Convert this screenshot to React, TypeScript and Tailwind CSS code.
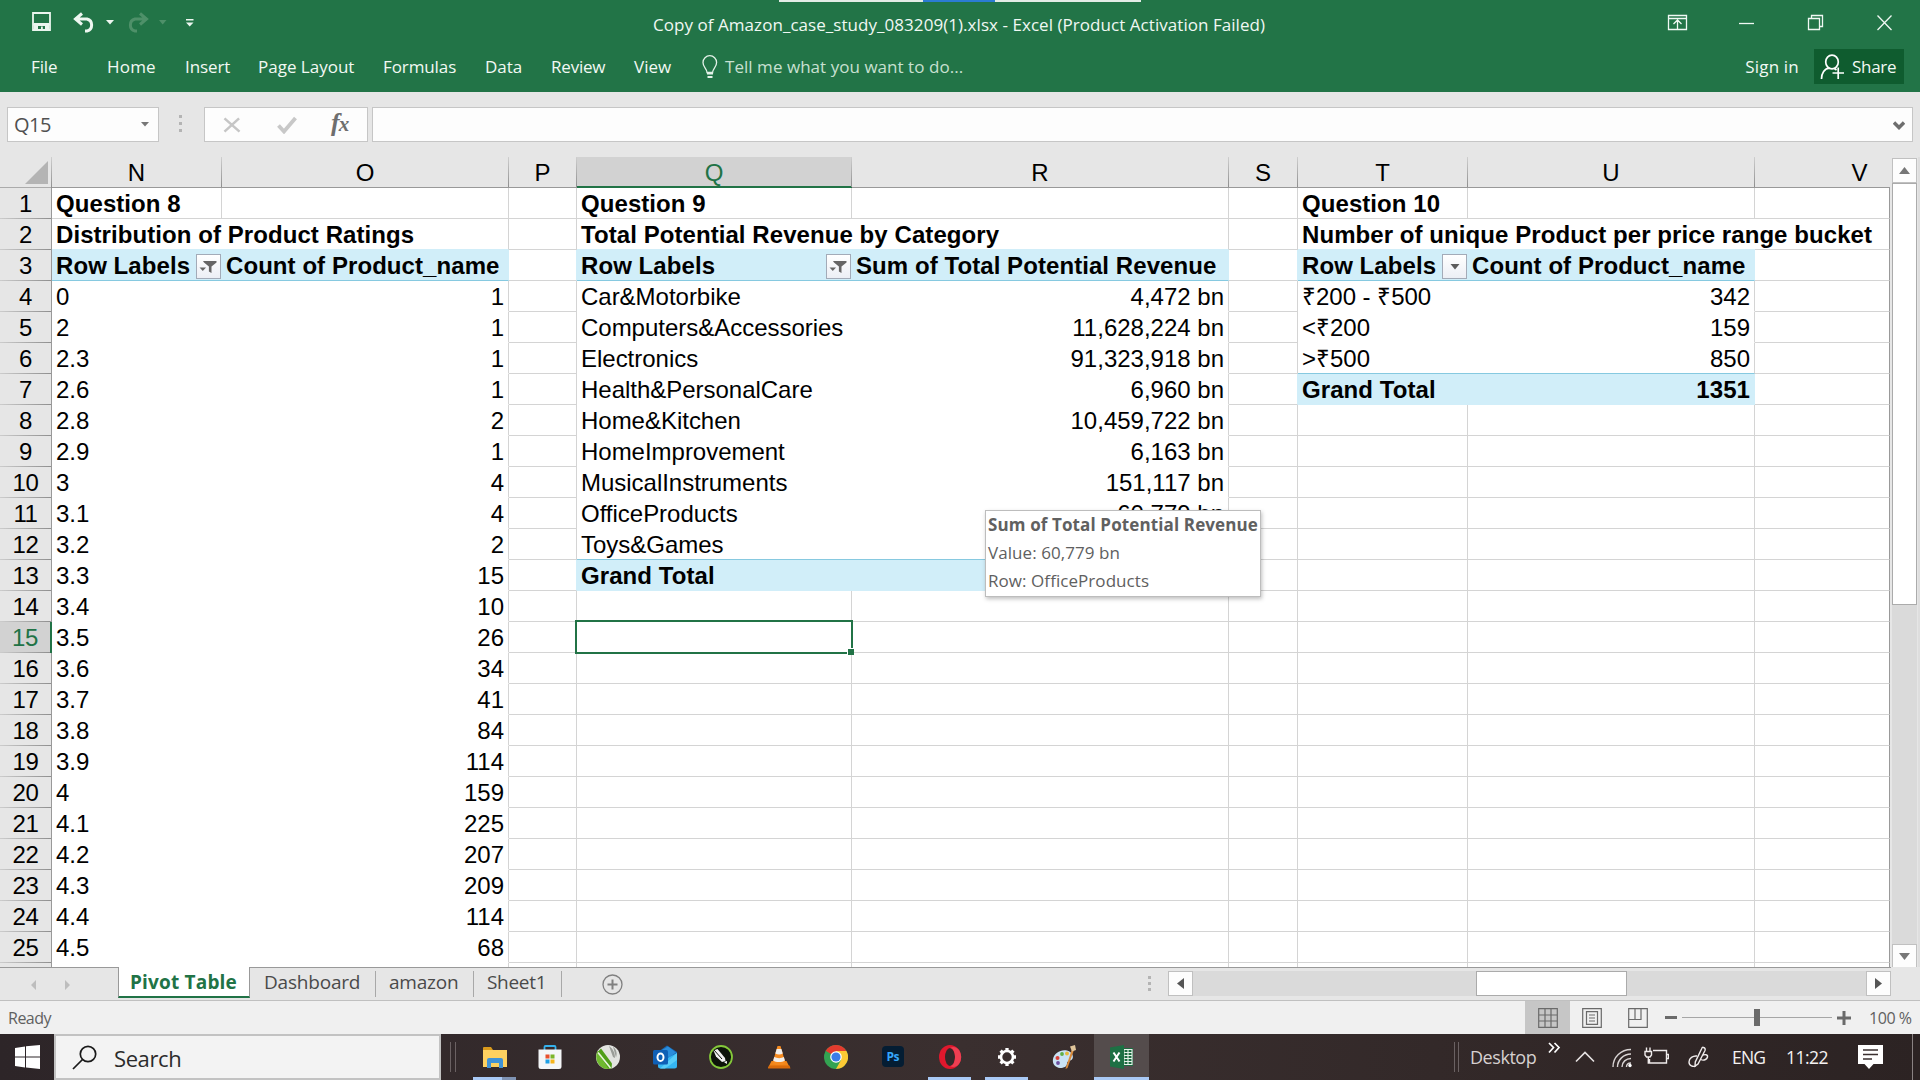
import React from "react";

type Col = { id: string; w: string };

const COLS: Col[] = [
  { id: "N", w: "w-[170px]" },
  { id: "O", w: "w-[287px]" },
  { id: "P", w: "w-[68px]" },
  { id: "Q", w: "w-[275px]" },
  { id: "R", w: "w-[377px]" },
  { id: "S", w: "w-[69px]" },
  { id: "T", w: "w-[170px]" },
  { id: "U", w: "w-[287px]" },
  { id: "V", w: "w-[135px]" },
];

const RATINGS: [string, string][] = [
  ["0", "1"], ["2", "1"], ["2.3", "1"], ["2.6", "1"], ["2.8", "2"], ["2.9", "1"],
  ["3", "4"], ["3.1", "4"], ["3.2", "2"], ["3.3", "15"], ["3.4", "10"], ["3.5", "26"],
  ["3.6", "34"], ["3.7", "41"], ["3.8", "84"], ["3.9", "114"], ["4", "159"], ["4.1", "225"],
  ["4.2", "207"], ["4.3", "209"], ["4.4", "114"], ["4.5", "68"],
];

const REVENUE: [string, string][] = [
  ["Car&Motorbike", "4,472 bn"],
  ["Computers&Accessories", "11,628,224 bn"],
  ["Electronics", "91,323,918 bn"],
  ["Health&PersonalCare", "6,960 bn"],
  ["Home&Kitchen", "10,459,722 bn"],
  ["HomeImprovement", "6,163 bn"],
  ["MusicalInstruments", "151,117 bn"],
  ["OfficeProducts", "60,779 bn"],
  ["Toys&Games", ""],
  ["Grand Total", ""],
];

const PRICES: [string, string][] = [
  ["₹200 - ₹500", "342"],
  ["<₹200", "159"],
  [">₹500", "850"],
  ["Grand Total", "1351"],
];

const DATA: Record<string, string> = {
  N1: "Question 8",
  N2: "Distribution of Product Ratings",
  N3: "Row Labels",
  O3: "Count of Product_name",
  Q1: "Question 9",
  Q2: "Total Potential Revenue by Category",
  Q3: "Row Labels",
  R3: "Sum of Total Potential Revenue",
  T1: "Question 10",
  T2: "Number of unique Product per price range bucket",
  T3: "Row Labels",
  U3: "Count of Product_name",
};
RATINGS.forEach(([a, b], i) => { DATA["N" + (i + 4)] = a; DATA["O" + (i + 4)] = b; });
REVENUE.forEach(([a, b], i) => { DATA["Q" + (i + 4)] = a; DATA["R" + (i + 4)] = b; });
PRICES.forEach(([a, b], i) => { DATA["T" + (i + 4)] = a; DATA["U" + (i + 4)] = b; });

// Last row of the pivot table that a column belongs to, and its total row.
const PIVOT_END: Record<string, number> = { N: 99, O: 99, Q: 13, R: 13, T: 7, U: 7 };
const NEXT: Record<string, string> = { O: "P", P: "Q", R: "S", S: "T", U: "V" };

function isBlue(col: string, row: number) {
  const end = PIVOT_END[col];
  return end !== undefined && (row === 3 || row === end);
}

function FilterButton({ filtered }: { filtered: boolean }) {
  return (
    <span className="mt-1 mr-px ml-auto flex h-[25px] w-[25px] shrink-0 items-center justify-center border border-[#a3abb8] bg-linear-to-b from-white to-[#eceff5]">
      {filtered ? (
        <svg width="19" height="15" viewBox="0 0 19 15" fill="#666666">
          <path d="M4 2h13.500v1.500l-5 4v6.500l-2.600-1.500v-5l-4.900-4z" />
          <path d="M.5 8.500h6.500l-3.200 3.500z" />
        </svg>
      ) : (
        <svg width="10" height="6" viewBox="0 0 10 6" fill="#5c5c5c"><path d="M.5 0h9l-4.500 5.500z" /></svg>
      )}
    </span>
  );
}

function Cell({ col, w, row }: { col: string; w: string; row: number }) {
  const end = PIVOT_END[col];
  const inPivot = end !== undefined && row >= 3 && row <= end;
  const blue = isBlue(col, row);
  const first = col === "N" || col === "Q" || col === "T";
  const text = DATA[col + row];
  const bold = row <= 3 || blue;
  const right = !first && row > 3;

  let br = "border-r border-r-[#d4d4d4]";
  if (first && inPivot) br = "";
  else if (col === "V") br = "border-r border-r-[#999999]";
  else if (blue || (NEXT[col] && isBlue(NEXT[col], row))) br = "border-r border-r-[#d1eef9]";
  else if (row === 2 && (first || col === "U")) br = "";

  let bb = "border-b-[#d4d4d4]";
  if (end !== undefined) {
    if (row === 2 || row === end) bb = "border-b-[#d1eef9]";
    else if (row === 3 || row === end - 1) bb = "border-b-[#86c9e0]";
    else if (inPivot) bb = "border-b-transparent";
  }

  return (
    <div className={`relative flex h-[31px] shrink-0 border-b pl-1 ${w} ${br} ${bb} ${blue ? "bg-[#d1eef9]" : ""} ${right ? "justify-end pr-1" : ""}`}>
      {text && (
        <span className={`leading-[31px] whitespace-nowrap text-black ${bold ? "font-bold tracking-[0.07px]" : right ? "" : "tracking-[-0.02px]"}`}>{text}</span>
      )}
      {row === 3 && first && <FilterButton filtered={col !== "T"} />}
      {col === "Q" && row === 15 && (
        <div className="absolute -top-[2px] -right-[2px] -bottom-[2px] -left-[2px] z-10 border-2 border-[#217346]">
          <div className="absolute -right-[3px] -bottom-[3px] h-[7px] w-[7px] border-t border-l border-white bg-[#217346]" />
        </div>
      )}
      {col === "R" && row === 11 && (
        <div className="absolute top-[12px] left-[133px] z-20 flex h-[87px] w-[276px] flex-col border border-[#bdbdbd] bg-white pl-[2px] font-['Open_Sans',sans-serif] text-[17px] whitespace-nowrap text-[#606060] shadow-[1px_2px_4px_rgba(0,0,0,0.25)]">
          <span className="h-7 leading-7 font-bold tracking-[0.12px]">Sum of Total Potential Revenue</span>
          <span className="h-7 leading-7 tracking-[0.06px]">Value: 60,779 bn</span>
          <span className="h-7 leading-7 tracking-[0.06px]">Row: OfficeProducts</span>
        </div>
      )}
    </div>
  );
}

function TitleBar() {
  return (
    <div className="relative flex h-[46px] items-center text-white">
      <div className="absolute top-0 left-[779px] flex h-[2px] w-[362px] bg-[#e3ece6]">
        <div className="ml-[144px] h-full w-[72px] bg-[#2b7cd3]" />
      </div>
      <svg className="ml-8" width="170" height="24" viewBox="32 11 170 24" fill="none">
        <path d="M33 13h17v17h-17zM33 24.500h17" stroke="#eaf5ee" strokeWidth="1.800" />
        <path d="M34 23h15v7h-4v-4h-7v4h-4z" fill="#eaf5ee" />
        <path d="M41 26.500h1.800v4h-1.800z" fill="#eaf5ee" />
        <path d="M82 13.500l-6.500 5.500 6.500 5.500M76 19h11a6.200 6.200 0 0 1 0 12h-2" stroke="#eef7f1" strokeWidth="3" />
        <path d="M106 20h8l-4 4.500z" fill="#eef7f1" />
        <path d="M140 13.500l6.500 5.500-6.500 5.500M146 19h-11a6.200 6.200 0 0 0 0 12h2" stroke="#4e9069" strokeWidth="3" />
        <path d="M159 20h7.500l-3.800 4.500z" fill="#4e9069" />
        <path d="M186 19h7.500v1.500h-7.500zM186 22.500h7.500l-3.800 4z" fill="#eef7f1" />
      </svg>
      <div className="ml-[451px] pt-[3px] text-[17px] leading-6 tracking-[0.05px] whitespace-nowrap text-[#f0f8f3]">
        Copy of Amazon_case_study_083209(1).xlsx - Excel (Product Activation Failed)
      </div>
      <svg className="ml-auto mr-[27px]" width="226" height="18" viewBox="1667 14 226 18" fill="none" stroke="#f0f8f3" strokeWidth="1.300">
        <path d="M1668.500 15.500h18v14h-18zM1668.500 18.500h18M1677.500 29v-9M1673.500 24l4-4 4 4" />
        <path d="M1739 23.500h15" />
        <path d="M1808.500 18.500h11v11h-11zM1811.500 18v-2.500h11v11h-3" />
        <path d="M1877.500 15.500l14 14.500M1891.500 15.500l-14 14.500" />
      </svg>
    </div>
  );
}

function Menu() {
  return (
    <div className="flex h-[46px] text-[17px] leading-[42px] whitespace-nowrap text-[#f2f9f4]">
      <span className="ml-[31px] w-[76px] tracking-[-0.1px]">File</span>
      <span className="w-[78px] tracking-[0.2px]">Home</span>
      <span className="w-[73px] tracking-[-0.1px]">Insert</span>
      <span className="w-[125px]">Page Layout</span>
      <span className="w-[102px] tracking-[-0.1px]">Formulas</span>
      <span className="w-[66px]">Data</span>
      <span className="w-[83px] tracking-[-0.2px]">Review</span>
      <span className="w-[68px]">View</span>
      <svg className="mt-[9px]" width="16" height="24" viewBox="0 0 16 24" fill="none" stroke="#e4f2e9" strokeWidth="1.300">
        <path d="M5 17.500c0-4-4-5-4-10a6.800 6.800 0 0 1 13.600 0c0 5-4 6-4 10z" />
        <path d="M5 18.500h6M5.500 22h5" strokeWidth="2" />
      </svg>
      <span className="ml-[7px] tracking-[0.04px] text-[#c8e0d1]">Tell me what you want to do...</span>
      <span className="ml-auto mr-[15px] tracking-[0.2px]">Sign in</span>
      <div className="mr-4 mt-[3px] flex h-[35px] w-[90px] items-center bg-[#0f5c2f]">
        <svg className="ml-[6px]" width="25" height="26" viewBox="0 0 25 26" fill="none" stroke="white" strokeWidth="1.700">
          <ellipse cx="12" cy="8" rx="6.300" ry="6.800" />
          <path d="M1.500 25c0-6 3-10.500 8-10.800M14.500 14.500l2 1.500M12.500 19h11.500M18.200 13.500v11.500" />
        </svg>
        <span className="ml-[7px] leading-[34px] tracking-[-0.3px]">Share</span>
      </div>
    </div>
  );
}

function FormulaBar() {
  return (
    <div className="flex h-[65px] items-start bg-[#e6e6e6] pt-[15px]">
      <div className="ml-[7px] flex h-[35px] w-[152px] items-center justify-between border border-[#c6c6c6] bg-[#fdfdfd] pr-[9px] pl-[6px] text-[20px] text-[#505050]">
        <span className="tracking-[-0.5px]">Q15</span>
        <svg width="8" height="5" viewBox="0 0 8 5"><path d="M0 0h8l-4 4.500z" fill="#777" /></svg>
      </div>
      <div className="ml-5 mt-2 flex flex-col gap-1">
        <span className="h-[3px] w-[3px] bg-[#b4b4b4]" />
        <span className="h-[3px] w-[3px] bg-[#b4b4b4]" />
        <span className="h-[3px] w-[3px] bg-[#b4b4b4]" />
      </div>
      <div className="ml-[22px] flex h-[35px] w-[164px] items-center border border-[#c6c6c6] bg-[#fdfdfd]">
        <svg className="ml-[18px]" width="18" height="16" viewBox="0 0 19 17" fill="none" stroke="#c6c6c6" strokeWidth="2.700"><path d="M1.500 1.500l16 14M17 1.500l-15.500 14" /></svg>
        <svg className="ml-9" width="20" height="18" viewBox="0 0 20 18" fill="none" stroke="#c8c8c8" strokeWidth="3.800"><path d="M1.500 9.500l5.500 6L18.500 2" /></svg>
        <span className="ml-[34px] -mt-[3px] font-['Liberation_Serif',serif] text-[26px] leading-[30px] font-bold tracking-[-1px] text-[#6e6e6e] italic">f<span className="text-[21px]">x</span></span>
      </div>
      <div className="ml-1 flex h-[35px] w-[1541px] items-center justify-end border border-[#c6c6c6] bg-[#fdfdfd] pr-[7px]">
        <svg className="mt-[2px]" width="12" height="10" viewBox="0 0 12 10" fill="none" stroke="#6e6e6e" strokeWidth="3.400"><path d="M1 1.500l5 5 5-5" /></svg>
      </div>
    </div>
  );
}

function ColumnHeaders() {
  return (
    <div className="flex h-[31px] bg-[#e6e6e6] text-[24px] leading-[31px] text-black">
      <div className="flex w-[52px] shrink-0 items-end justify-end border-b border-b-[#ababab] pr-[4px] pb-[3px]">
        <svg width="23" height="23" viewBox="0 0 23 23"><path d="M23 0v23h-23z" fill="#b4b4b4" /></svg>
      </div>
      {COLS.map((c) => (
        <div key={c.id} className={`relative flex h-[31px] shrink-0 justify-center ${c.w} ${c.id === "Q" ? "border-b-2 border-b-[#217346] bg-[#d2d2d2] text-[#217346]" : "border-b border-b-[#999999]"} ${c.id === "V" ? "pl-[74px]" : "pr-px"}`}>
          <span>{c.id}</span>
          {c.id !== "V" && <div className="absolute top-0 right-0 h-[30px] w-px bg-linear-to-b from-[#cfcfcf] to-[#8f8f8f]" />}
          {c.id === "N" && <div className="absolute top-0 -left-px h-[31px] w-px bg-linear-to-b from-[#cfcfcf] to-[#8f8f8f]" />}
        </div>
      ))}
    </div>
  );
}

function Sheet() {
  const rows = Array.from({ length: 26 }, (_, i) => i + 1);
  return (
    <div className="flex h-[810px] bg-[#e6e6e6] font-['Liberation_Sans',Arial,sans-serif]">
      <div className="flex w-[1890px] shrink-0 flex-col overflow-hidden">
        <ColumnHeaders />
        <div className="h-[779px] overflow-hidden bg-white text-[24px]">
          {rows.map((r) => (
            <div key={r} className="flex h-[31px]">
              <div className={`flex h-[31px] w-[52px] shrink-0 flex-col ${r === 15 ? "border-r-2 border-r-[#217346] bg-[#d2d2d2] text-[#217346]" : "border-r border-r-[#999999] bg-[#e6e6e6] text-black"}`}>
                <span className="h-[30px] text-center leading-[31px] tracking-[-0.4px]">{r <= 25 ? r : ""}</span>
                <div className="h-px bg-linear-to-r from-[#cccccc] to-[#8f8f8f]" />
              </div>
              {COLS.map((c) => <Cell key={c.id} col={c.id} w={c.w} row={r} />)}
            </div>
          ))}
        </div>
      </div>
      <div className="flex w-[30px] flex-col items-center border-r-2 border-r-[#dedede] pt-[1px] pl-[1px]">
        <div className="flex h-[25px] w-[25px] items-center justify-center border border-[#c0c0c0] bg-[#fdfdfd]">
          <svg width="11" height="7" viewBox="0 0 11 7"><path d="M5.500 0l5.500 7h-11z" fill="#777" /></svg>
        </div>
        <div className="h-[422px] w-[25px] border border-[#ababab] bg-white" />
        <div className="w-[25px] grow bg-[#dadada]" />
        <div className="mb-[-2px] flex h-[25px] w-[25px] items-center justify-center border border-[#c0c0c0] bg-[#fdfdfd]">
          <svg width="11" height="7" viewBox="0 0 11 7"><path d="M0 0h11l-5.500 7z" fill="#777" /></svg>
        </div>
      </div>
    </div>
  );
}

function SheetTabs() {
  return (
    <div className="flex h-[34px] border-b border-b-[#c0c0c0] bg-[#e6e6e6] text-[19px] leading-[30px] whitespace-nowrap text-[#4a4a4a]">
      <div className="flex w-[118px] border-t border-t-[#999999]">
        <svg className="mt-3 ml-[31px]" width="40" height="10" viewBox="0 0 40 10" fill="#bdbdbd"><path d="M5 0v10l-5-5zM34 0v10l5-5z" /></svg>
      </div>
      <div className="h-[31px] w-[132px] border-r border-b-[2px] border-l border-r-[#999999] border-b-[#217346] border-l-[#999999] bg-white pr-px text-center font-bold tracking-[0.18px] text-[#217346]">Pivot Table</div>
      <div className="flex grow border-t border-t-[#999999] pt-[3px]">
        <span className="-mt-1 ml-[14px] w-[111px] tracking-[-0.2px]">Dashboard</span>
        <span className="h-[26px] w-px bg-[#a8a8a8]" />
        <span className="-mt-1 ml-[13px] w-[84px] tracking-[-0.2px]">amazon</span>
        <span className="h-[26px] w-px bg-[#a8a8a8]" />
        <span className="-mt-1 ml-[13px] w-[74px] tracking-[-0.3px]">Sheet1</span>
        <span className="h-[26px] w-px bg-[#a8a8a8]" />
        <svg className="mt-[3px] ml-[40px]" width="21" height="21" viewBox="0 0 21 21" fill="none" stroke="#808080"><circle cx="10.500" cy="10.500" r="9.500" strokeWidth="1.300" /><path d="M5.500 10.500h10M10.500 5.500v10" strokeWidth="2" /></svg>
      </div>
      <div className="flex w-[743px] border-t border-t-[#999999] pt-[3px]">
        <div className="mt-[5px] flex w-[20px] flex-col gap-[3px]">
          <span className="h-[3px] w-[3px] bg-[#b4b4b4]" />
          <span className="h-[3px] w-[3px] bg-[#b4b4b4]" />
          <span className="h-[3px] w-[3px] bg-[#b4b4b4]" />
        </div>
        <div className="flex h-[25px] w-[25px] items-center justify-center border border-[#c0c0c0] bg-[#fdfdfd]">
          <svg width="7" height="11" viewBox="0 0 7 11"><path d="M7 0v11l-7-5.500z" fill="#555" /></svg>
        </div>
        <div className="h-[25px] w-[283px] bg-[#dadada]" />
        <div className="h-[25px] w-[151px] border border-[#ababab] bg-white" />
        <div className="h-[25px] w-[239px] bg-[#dadada]" />
        <div className="flex h-[25px] w-[25px] items-center justify-center border border-[#c0c0c0] bg-[#fdfdfd]">
          <svg width="7" height="11" viewBox="0 0 7 11"><path d="M0 0v11l7-5.500z" fill="#555" /></svg>
        </div>
      </div>
      <div className="w-[29px]" />
    </div>
  );
}

function StatusBar() {
  return (
    <div className="flex h-[33px] items-center bg-[#f0f0f0] text-[16px] whitespace-nowrap text-[#606060]">
      <span className="ml-2 tracking-[-0.5px]">Ready</span>
      <div className="ml-auto flex h-[33px] w-[45px] items-center justify-center bg-[#c6c6c6]">
        <svg width="20" height="20" viewBox="0 0 20 20" fill="none" stroke="#6a6a6a" strokeWidth="1.200"><path d="M.7.700h18.600v18.600h-18.600zM.7 7h18.600M.7 13h18.600M7 .7v18.600M13 .7v18.600" /></svg>
      </div>
      <svg className="ml-[12px]" width="20" height="20" viewBox="0 0 20 20" fill="none" stroke="#6a6a6a" strokeWidth="1.200"><path d="M.7.700h18.600v18.600h-18.600zM4.500 3.700h11v12.600h-11zM7 7h6M7 10h6M7 13h6" /></svg>
      <svg className="ml-[26px]" width="20" height="20" viewBox="0 0 20 20" fill="none" stroke="#6a6a6a" strokeWidth="1.200"><path d="M.7.700h18.600v18.600h-18.600zM.7 11.500h12.300v-10.800M7 .7v10.800" /></svg>
      <div className="ml-[17px] h-[3px] w-3 bg-[#6a6a6a]" />
      <div className="ml-[5px] flex h-[17px] w-[150px] items-center">
        <div className="h-px w-[72px] bg-[#a6a6a6]" />
        <div className="h-[17px] w-[6px] bg-[#6a6a6a]" />
        <div className="h-px w-[72px] bg-[#a6a6a6]" />
      </div>
      <svg className="ml-[5px]" width="14" height="14" viewBox="0 0 14 14" stroke="#6a6a6a" strokeWidth="3"><path d="M0 7h14M7 0v14" /></svg>
      <span className="mr-[8px] ml-[18px] w-[43px] tracking-[-0.45px]">100 %</span>
    </div>
  );
}

const APPS: { name: string; box: string; bar: string; icon: React.ReactNode }[] = [
  {
    name: "explorer", box: "w-[43px] ml-[17px]", bar: "two",
    icon: <><path d="M0 3a1 1 0 0 1 1-1h7l2 3h-10z" fill="#d99a1c" /><path d="M0 5h24v17h-24z" fill="#fdd160" /><path d="M4 23v-8a2 2 0 0 1 2-2h12a2 2 0 0 1 2 2v8h-4v-5h-8v5z" fill="#3f93d6" /></>,
  },
  {
    name: "store", box: "w-[55px] ml-[6px]", bar: "",
    icon: <><path d="M6.500 6v-4a1 1 0 0 1 1-1h9a1 1 0 0 1 1 1v4" fill="none" stroke="#35b1ec" strokeWidth="1.800" /><path d="M.5 4.500h23v17a2.500 2.500 0 0 1-2.500 2.500h-18a2.500 2.500 0 0 1-2.500-2.500z" fill="#f4f6f8" /><path d="M7.500 9.500h4v4h-4z" fill="#e8512f" /><path d="M12.500 9.500h4v4h-4z" fill="#7bb52a" /><path d="M7.500 14.500h4v4h-4z" fill="#1fa0e6" /><path d="M12.500 14.500h4v4h-4z" fill="#f6b51c" /></>,
  },
  {
    name: "corel", box: "w-[55px] ml-[3px]", bar: "",
    icon: <><circle cx="12" cy="12" r="12" fill="#e2e3e0" /><path d="M13 1c3.500 2.500 6 6 6 12l-2-1zM17 1.500c3.500 3 4.500 7 3 11" fill="#9a9c98" /><path d="M1.500 6C-1 11 0 19 6.500 22.700c3 1.600 6 1.600 9 .6z" fill="#6fb92f" /><path d="M1.500 7l3.500-3.500 11 15-.5 4.800-3 .5z" fill="#4f9e18" /><path d="M2 7.500l12.500 15.500" stroke="#eaf5df" strokeWidth="1.600" fill="none" /></>,
  },
  {
    name: "outlook", box: "w-[55px] ml-[2px]", bar: "",
    icon: <><path d="M5 7l9-6.500 10 6.500v11h-19z" fill="#1769b5" /><path d="M9 5l6-3.500 8 6-7 5z" fill="#2b8ddb" /><path d="M24 8v13a2.500 2.500 0 0 1-2.500 2.500h-14a2.500 2.500 0 0 1-2.500-2.500v-3z" fill="#35b6f2" /><path d="M24 8v7l-12 8.500h-5z" fill="#58cdf8" /><rect x="0" y="5" width="15" height="14.500" rx="1.500" fill="#0f5fb5" /><ellipse cx="7.500" cy="12.200" rx="3" ry="3.800" fill="none" stroke="#fff" strokeWidth="2" /></>,
  },
  {
    name: "draw", box: "w-[55px] ml-[1px]", bar: "",
    icon: <><circle cx="12" cy="12" r="11" fill="#0d140a" stroke="#84c83a" strokeWidth="1.800" /><path d="M4.500 5.500l4-1.500 7.500 9 .5 3-3.500 1-6-5.500z" fill="#f2f2f2" /><path d="M15 17l3-1-.2 3z" fill="#fff" /><path d="M5 5l8 9" stroke="#0d140a" strokeWidth="1" /></>,
  },
  {
    name: "vlc", box: "w-[55px] ml-[3px]", bar: "",
    icon: <><path d="M4.500 16h15l3.500 7h-22z" fill="#f08519" /><path d="M2 20.500h20.500l1 3h-22.500z" fill="#d96b0b" /><path d="M10.500 1h3l5 17c-2 2.500-11 2.500-13 0z" fill="#f58a1f" /><path d="M9.700 4h4.700l1.400 4.500c-2 1.200-5.500 1.200-7.500 0zM7.200 12c3 1.500 7 1.500 9.700 0l1 3.500c-3 2-9 2-11.700 0z" fill="#f1efec" /></>,
  },
  {
    name: "chrome", box: "w-[55px] ml-[2px]", bar: "",
    icon: <><circle cx="12" cy="12" r="12" fill="#33a352" /><path d="M12 12L1.600 6a12 12 0 0 1 20.800 0z" fill="#e33b2e" /><path d="M12 12V6h10.400a12 12 0 0 1-10.400 18l5-9z" fill="#fcc934" /><path d="M1.600 6l5.200 9 5.200-3z" fill="#33a352" /><circle cx="12" cy="12" r="5.800" fill="#fff" /><circle cx="12" cy="12" r="4.600" fill="#3a7de8" /></>,
  },
  {
    name: "ps", box: "w-[55px] ml-[2px]", bar: "",
    icon: <><rect x="1" y="1" width="22" height="21" rx="4" fill="#041d33" /><text x="12" y="15.500" textAnchor="middle" fontSize="12" fontWeight="700" fontFamily="Open Sans, sans-serif" fill="#35a7fb" textLength="13">Ps</text></>,
  },
  {
    name: "opera", box: "w-[43px] ml-[8px]", bar: "one",
    icon: <><ellipse cx="12" cy="12" rx="11" ry="12" fill="#e0182d" /><ellipse cx="12" cy="12" rx="5" ry="9" fill="#33292a" /><path d="M12 3c3 0 5 4 5 9s-2 9-5 9c3 2 6.500 1 9-2a12 12 0 0 0 0-14c-2.500-3-6-4-9-2z" fill="#ee3f52" /></>,
  },
  {
    name: "settings", box: "w-[43px] ml-[14px]", bar: "one",
    icon: <g fill="none" stroke="#fff"><circle cx="12" cy="12" r="6" strokeWidth="2.600" /><path d="M12 3v3M12 18v3M3 12h3M18 12h3M5.600 5.600l2.200 2.200M16.200 16.200l2.200 2.200M18.400 5.600l-2.200 2.200M7.800 16.200l-2.200 2.200" strokeWidth="3.300" /></g>,
  },
  {
    name: "paint", box: "w-[55px] ml-[8px]", bar: "",
    icon: <><path d="M1 14c1-6 8-10 14-8.500 6 1.500 7 7 5 9-2 2-5 1-5 4s-3 4.500-7 4.500c-4.500-.5-8-4-7-9z" fill="#c9e2f4" /><circle cx="5.500" cy="13" r="2" fill="#d8413a" /><circle cx="10" cy="9" r="1.900" fill="#5faf46" /><circle cx="15" cy="8.500" r="1.900" fill="#e8b93a" /><circle cx="6" cy="18" r="1.900" fill="#6b4fa0" /><path d="M20 4l2 1-6.500 18-2 1 .5-2z" fill="#d98b3c" /><path d="M18 1.500l5-1.500 1 5-4 1.500z" fill="#e0c59a" /></>,
  },
  {
    name: "excel", box: "w-[55px] ml-[3px] bg-[#544c4c]", bar: "one",
    icon: <><path d="M12 3h11v18h-11z" fill="#1c6b40" /><path d="M14 4.500h8v3h-8zM14 7.500h8v3h-8zM14 10.500h8v3h-8zM14 13.500h8v3h-8zM14 16.500h8v3h-8zM18 4v16" stroke="#e6f2ea" strokeWidth="1.100" fill="none" /><path d="M0 2.500l14-2.500v24l-14-2.500z" fill="#1d7044" /><path d="M3.500 7.500l6 9M9.500 7.500l-6 9" stroke="#fff" strokeWidth="2" /></>,
  },
];

function Taskbar() {
  return (
    <div className="flex h-[46px] bg-linear-to-r from-[#2d2528] via-[#3a2f2f] to-[#2c2323] whitespace-nowrap">
      <div className="flex w-[54px] items-center pl-[15px]">
        <svg width="25" height="24" viewBox="0 0 25 24" fill="#fff"><path d="M0 3l10-1.500v10h-10zM11 1.300L25 0v11.500h-14zM0 12.500h10v10L0 21zM11 12.500h14V24l-14-1.500z" /></svg>
      </div>
      <div className="flex w-[387px] items-center border-2 border-[#c2c2c2] bg-[#f3f3f3]">
        <svg className="ml-4" width="25" height="25" viewBox="0 0 25 25" fill="none" stroke="#1a1a1a" strokeWidth="1.700"><circle cx="16" cy="9" r="7.700" /><path d="M10.500 14.500L1 24" /></svg>
        <span className="ml-[17px] pt-[3px] text-[22px] tracking-[-0.4px] text-[#2b2b2b]">Search</span>
      </div>
      <div className="ml-[9px] mt-2 h-[30px] w-[6px] border-x border-x-[#6a6162]" />
      {APPS.map((a) => (
        <div key={a.name} className={`relative flex h-[46px] shrink-0 items-center justify-center ${a.box}`}>
          <svg width="24" height="24" viewBox="0 0 24 24">{a.icon}</svg>
          {a.bar === "one" && <div className="absolute inset-x-0 bottom-0 h-[3px] bg-[#a9c9f5]" />}
          {a.bar === "two" && (
            <div className="absolute inset-x-0 bottom-0 flex h-[3px]">
              <div className="w-[29px] bg-[#a9c9f5]" />
              <div className="grow bg-[#7f93b3]" />
            </div>
          )}
        </div>
      ))}
      <div className="ml-auto mt-2 h-[30px] w-[5px] border-x border-x-[#6a6162]" />
      <span className="ml-[11px] w-[66px] text-[18px] leading-[47px] tracking-[-0.45px] text-[#d6d0d0]">Desktop</span>
      <svg className="ml-[12px] mt-[8px]" width="13" height="12" viewBox="0 0 13 12" fill="none" stroke="#fff" strokeWidth="1.700"><path d="M1 1l4.500 4.500L1 10.500M6.500 1l4.500 4.500-4.500 5" /></svg>
      <svg className="ml-[14px] mt-[17px]" width="20" height="12" viewBox="0 0 20 12" fill="none" stroke="#e6e2e2" strokeWidth="1.600"><path d="M1 10.500L10 1.500l9 9" /></svg>
      <svg className="ml-[17px] mt-[14px]" width="21" height="20" viewBox="0 0 21 20" fill="none" stroke="#d9d4d4" strokeWidth="1.400">
        <path d="M1 19C1 9 9 1.500 19 1.500M5.500 19c0-7 6-13 13.500-13M10 19c0-5 4-8.500 9-8.500M14.500 19c0-2.500 2-4 4.500-4" />
        <circle cx="18" cy="17.500" r="1.700" fill="#fff" stroke="none" />
      </svg>
      <svg className="ml-[11px] mt-[13px]" width="25" height="19" viewBox="0 0 25 19" fill="none" stroke="#f0ecec" strokeWidth="1.400">
        <path d="M9 3.500h13.500v12.500h-17v-4M22.500 7.500h2v4h-2M1 4.500h6.500v3.500l-1.500 2h-3.500l-1.500-2zM2.500 4.500v-4M6 4.500v-4M4.300 10v6h2" />
      </svg>
      <svg className="ml-[19px] mt-[12px]" width="21" height="22" viewBox="0 0 21 22" fill="none" stroke="#f0ecec" strokeWidth="1.400">
        <path d="M15.500 1.500c1.500.5 2 1.500 1.500 3L10 18l-3 2 .3-4L13.500 3c.5-1.500 1-2 2-1.500zM9 10c-4-.5-8 2-8 6s4 5 7 4M14 9.500c3-1.500 6-1 5.500 1.500s-4 4-6.500 2.500" />
      </svg>
      <span className="ml-[23px] w-[34px] text-[17.500px] leading-[47px] tracking-[-0.8px] text-[#f5f2f2]">ENG</span>
      <span className="ml-[20px] w-[43px] text-[17.500px] leading-[47px] tracking-[-0.5px] text-[#f5f2f2]">11:22</span>
      <svg className="ml-[29px] mt-[11px]" width="25" height="25" viewBox="0 0 25 25"><path d="M0 0h25v19h-9.500l-4.500 5-4.500-5h-6.500z" fill="#fff" /><path d="M5 5h15M5 9.500h15M5 14h9" stroke="#3a2f2f" strokeWidth="1.400" /></svg>
      <div className="mr-[7px] ml-[29px] h-[46px] w-px bg-[#8a8283]" />
    </div>
  );
}

export default function App() {
  return (
    <div className="flex h-[1080px] w-[1920px] flex-col overflow-hidden bg-[#e6e6e6] font-['Open_Sans','Noto_Sans',sans-serif]">
      <div className="h-[92px] bg-[#227447]">
        <TitleBar />
        <Menu />
      </div>
      <FormulaBar />
      <Sheet />
      <SheetTabs />
      <StatusBar />
      <Taskbar />
    </div>
  );
}
